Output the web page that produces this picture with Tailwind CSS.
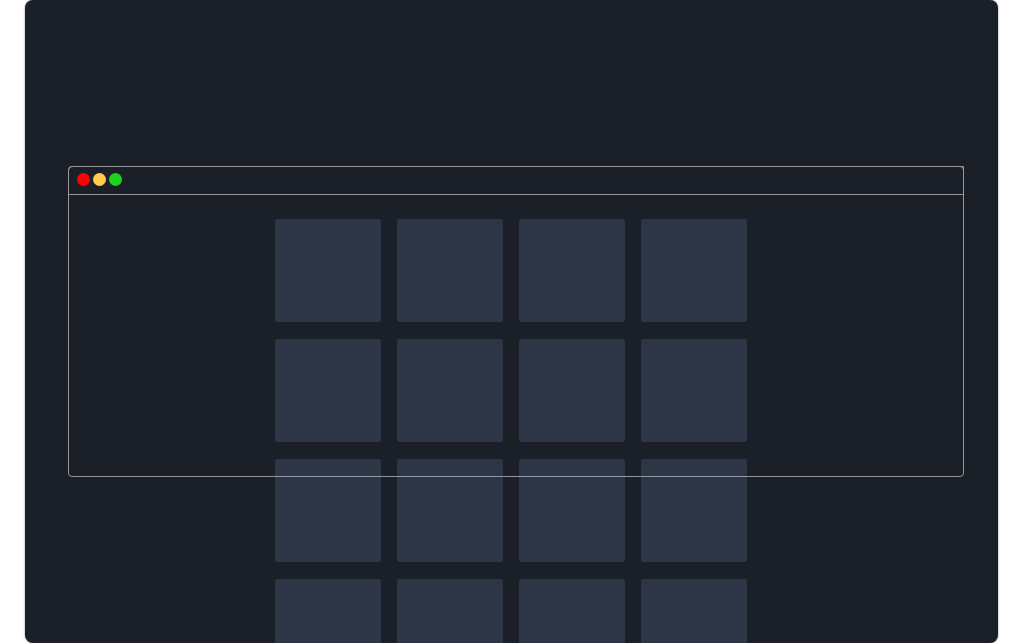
<!DOCTYPE html>
<html>
<head>
<script src="https://cdn.jsdelivr.net/npm/@tailwindcss/browser@4"></script>
</head>
<body class="bg-white overflow-hidden">
<div class="w-[1024px] h-[643px] pl-[25px] pr-[26px]">
  <div class="relative h-full rounded-lg bg-[#1a1f28] overflow-hidden shadow-[0_0_2px_rgba(0,0,0,0.5)]">
    <div class="flex justify-center pt-[219px] pr-[2px]">
      <div class="grid grid-cols-[repeat(4,106px)] auto-rows-[103px] gap-x-4 gap-y-[17px]">
        <div class="rounded-[2px] bg-[#2c3646]"></div><div class="rounded-[2px] bg-[#2c3646]"></div><div class="rounded-[2px] bg-[#2c3646]"></div><div class="rounded-[2px] bg-[#2c3646]"></div>
        <div class="rounded-[2px] bg-[#2c3646]"></div><div class="rounded-[2px] bg-[#2c3646]"></div><div class="rounded-[2px] bg-[#2c3646]"></div><div class="rounded-[2px] bg-[#2c3646]"></div>
        <div class="rounded-[2px] bg-[#2c3646]"></div><div class="rounded-[2px] bg-[#2c3646]"></div><div class="rounded-[2px] bg-[#2c3646]"></div><div class="rounded-[2px] bg-[#2c3646]"></div>
        <div class="rounded-[2px] bg-[#2c3646]"></div><div class="rounded-[2px] bg-[#2c3646]"></div><div class="rounded-[2px] bg-[#2c3646]"></div><div class="rounded-[2px] bg-[#2c3646]"></div>
      </div>
    </div>
    <div class="absolute left-[43px] top-[166px] w-[896px] h-[311px] rounded-[4px] border border-[#94989e]">
      <div class="flex items-start gap-[3px] h-[29px] -mt-px -mx-px pt-[6px] px-[8px] border border-[#94989e] rounded-tl-[4px]">
        <span class="w-[13px] h-[13px] rounded-full bg-[#ff0000]"></span>
        <span class="w-[13px] h-[13px] rounded-full bg-[#ffcc4d]"></span>
        <span class="w-[13px] h-[13px] rounded-full bg-[#1fd01f]"></span>
      </div>
    </div>
  </div>
</div>
</body>
</html>
